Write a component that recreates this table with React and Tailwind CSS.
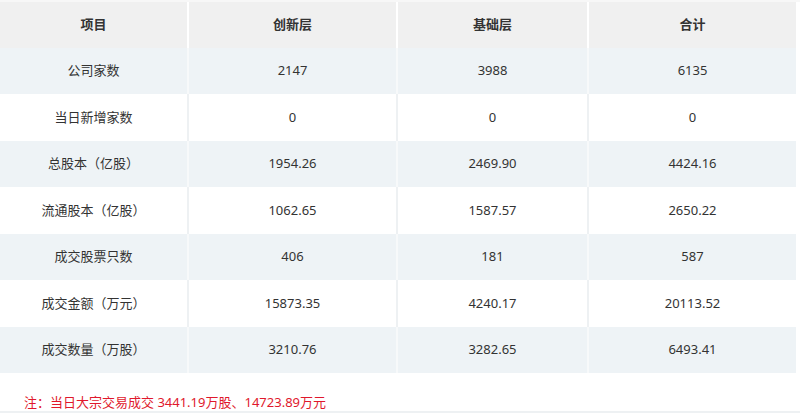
import React from "react";

const COLS = ["项目", "创新层", "基础层", "合计"];

const ROWS = [
  ["公司家数", "2147", "3988", "6135"],
  ["当日新增家数", "0", "0", "0"],
  ["总股本（亿股）", "1954.26", "2469.90", "4424.16"],
  ["流通股本（亿股）", "1062.65", "1587.57", "2650.22"],
  ["成交股票只数", "406", "181", "587"],
  ["成交金额（万元）", "15873.35", "4240.17", "20113.52"],
  ["成交数量（万股）", "3210.76", "3282.65", "6493.41"],
];

const WIDTHS = ["w-[189px]", "w-[209px]", "w-[191px]", "w-[207px]"];

export default function App() {
  return (
    <div className="w-[800px] h-[413px] bg-white text-[#333] font-['Noto_Sans','Noto_Sans_CJK_SC',sans-serif] text-[13px] overflow-hidden">
      <div className="h-[2px] bg-[#f7f7f7]" />
      {/* header */}
      <div className="flex h-[46px] bg-[#f0f0f0] w-[796px]">
        {COLS.map((c, i) => (
          <div
            key={c}
            className={`${WIDTHS[i]} flex items-center justify-center font-bold ${i < 3 ? "border-r-2 border-white" : ""}`}
          >
            {c}
          </div>
        ))}
      </div>

      {/* body */}
      {ROWS.map((row, r) => {
        const shaded = r % 2 === 0;
        return (
          <div
            key={r}
            className={`flex w-[796px] ${r % 2 === 0 ? "h-[46px]" : "h-[47px]"} ${shaded ? "bg-[#eef3f6]" : "bg-white"}`}
          >
            {row.map((cell, i) => (
              <div
                key={i}
                className={`${WIDTHS[i]} flex items-center justify-center ${
                  i < 3 ? (shaded ? "border-r-2 border-[#f7f9fa]" : "border-r-2 border-[#eef1f3]") : ""
                }`}
              >
                {cell}
              </div>
            ))}
          </div>
        );
      })}

      {/* note */}
      <div className="h-[38px] pt-[21px] pl-[24px] text-[#e0182c] leading-[17px]">
        注：当日大宗交易成交 3441.19万股、14723.89万元
      </div>
      <div className="h-[2px] bg-[#eef1f3]" />
    </div>
  );
}
